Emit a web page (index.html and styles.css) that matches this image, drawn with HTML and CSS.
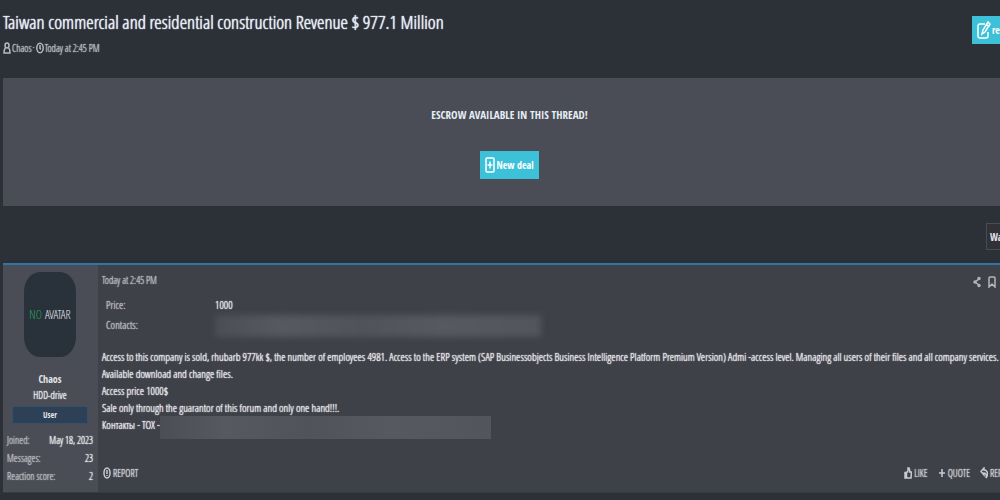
FILE: index.html
```html
<!DOCTYPE html>
<html lang="en">
<head>
  <meta charset="UTF-8">
  <title>Taiwan commercial and residential construction Revenue $ 977.1 Million</title>
  <link rel="stylesheet" href="styles.css">
</head>
<body>
  <main class="page">

    <header class="thread-header">
      <div>
        <h1>Taiwan commercial and residential construction Revenue $ 977.1 Million</h1>
        <div class="thread-meta">
          <svg class="icon icon-small" viewBox="0 0 8 12"><ellipse cx="4" cy="3.500" rx="2" ry="2.500"/><path d="M2.500 6Q1 7 1 11h6q0-4-1.500-5"/></svg>
          <a href="#chaos">Chaos</a>
          <span>·</span>
          <svg class="icon icon-small" viewBox="0 0 8 12"><ellipse cx="4" cy="6" rx="3.200" ry="4.800"/><path d="M4 3v3.500l1 1"/></svg>
          <time>Today at 2:45 PM</time>
        </div>
      </div>
      <button class="button button-reply">
        <svg class="icon icon-edit" viewBox="0 0 14 18"><path d="M8 3H3Q1 3 1 5v10q0 2 2 2h6q2 0 2-2v-4M5 13l1-4 5-8 2 2-5 8zM9.500 3.500l2 2"/></svg>
        reply
      </button>
    </header>

    <section class="escrow">
      <h2>ESCROW AVAILABLE IN THIS THREAD!</h2>
      <button class="button">
        <svg class="icon icon-deal" viewBox="0 0 10 16"><rect x="1" y="1" width="8" height="14" rx="1"/><path d="M5 4.500v7M2.500 8h5"/></svg>
        New deal
      </button>
    </section>

    <div class="thread-tools">
      <button class="button-watch">Watch</button>
    </div>

    <article class="post">
      <aside class="user">
        <div class="avatar"><span class="avatar-no">NO</span>&nbsp;AVATAR</div>
        <a class="user-name" href="#chaos">Chaos</a>
        <div class="user-title">HDD-drive</div>
        <div class="user-banner">User</div>
        <dl class="user-stats">
          <div><dt>Joined:</dt><dd>May 18, 2023</dd></div>
          <div><dt>Messages:</dt><dd>23</dd></div>
          <div><dt>Reaction score:</dt><dd>2</dd></div>
        </dl>
      </aside>

      <div class="post-main">
        <div class="post-top">
          <time>Today at 2:45 PM</time>
          <div class="post-icons">
            <a href="#share" aria-label="Share"><svg class="icon icon-small" viewBox="0 0 8 12"><path d="M6 3L2 6l4 3"/><circle cx="6" cy="2.500" r="1"/><circle cx="2" cy="6" r="1"/><circle cx="6" cy="9.500" r="1"/></svg></a>
            <a href="#bookmark" aria-label="Bookmark"><svg class="icon icon-small" viewBox="0 0 8 12"><path d="M2 1h4q1 0 1 1v9L4 8l-3 3V2q0-1 1-1z"/></svg></a>
          </div>
        </div>

        <dl class="fields">
          <dt>Price:</dt><dd>1000</dd>
          <dt>Contacts:</dt><dd><span class="hidden-contact"></span></dd>
        </dl>

        <div class="message">
          Access to this company is sold, rhubarb 977kk $, the number of employees 4981. Access to the ERP system (SAP Businessobjects Business Intelligence Platform Premium Version) Admi -access level. Managing all users of their files and all company services.<br>
          Available download and change files.<br>
          Access price 1000$<br>
          Sale only through the guarantor of this forum and only one hand!!!.<br>
          <span class="contact-line">Контакты - TOX -<span class="hidden-tox"></span></span>
        </div>

        <footer class="actions">
          <a href="#report"><svg class="icon icon-small" viewBox="0 0 8 12"><ellipse cx="4" cy="6" rx="3" ry="5"/><path d="M4 3v4M4 8v1"/></svg>REPORT</a>
          <a class="action-like" href="#like"><svg class="icon icon-small" viewBox="0 0 8 12"><path d="M1 5.500h1.500V11H1zM2.500 6L4 3.500V1h1q1 1 .5 4H7.500L7 11H2.500"/></svg>LIKE</a>
          <a href="#quote"><svg class="icon icon-small" viewBox="0 0 8 12"><path d="M4 2v8M1 6h6"/></svg>QUOTE</a>
          <a href="#reply"><svg class="icon icon-small" viewBox="0 0 8 12"><path d="M4 1L1 4.500 4 8V6q3 0 2 5 3-5 0-7.500L4 3z"/></svg>REPLY</a>
        </footer>
      </div>
    </article>

  </main>
</body>
</html>
```

FILE: styles.css
```css
* {
  box-sizing: border-box;
}

body {
  margin: 0;
  overflow: hidden;
  background: #2c3138;
  color: #e4e5e8;
  font-family: "Open Sans Condensed Light", "Open Sans Condensed", "Liberation Sans", sans-serif;
  font-size: 11px;
  line-height: 18px;
  text-shadow: 0 0 1px currentColor, 0 0 1px currentColor;
}

/* the board runs a little past the right edge of the window */
.page {
  margin: 0 -16px 0 3px;
}

a {
  color: inherit;
  text-decoration: none;
}

h1,
h2,
dl,
dd {
  margin: 0;
}

.icon {
  flex: none;
  fill: none;
  stroke: currentColor;
  stroke-width: 1.5;
}

.icon-edit {
  width: 14px;
  height: 18px;
}

.icon-deal {
  width: 10px;
  height: 16px;
}

.icon-small {
  width: 8px;
  height: 12px;
}

.thread-header {
  display: flex;
  justify-content: space-between;
  height: 78px;
  padding-top: 8px;
}

h1 {
  color: #e7edf5;
  font-size: 19px;
  font-weight: normal;
  line-height: 28px;
  white-space: nowrap;
}

.thread-meta {
  display: flex;
  align-items: center;
  gap: 1px;
  margin-top: 3px;
  color: #b6b9bf;
  font-size: 10px;
}

.button,
.button-watch,
.escrow h2,
.user-name,
.user-banner {
  font-family: "Open Sans Condensed", "Liberation Sans", sans-serif;
  font-weight: bold;
  text-shadow: none;
}

.button {
  display: flex;
  align-items: center;
  gap: 1px;
  height: 28px;
  padding: 0 5px;
  border: 0;
  background: #3cc1d9;
  color: #fff;
  font-size: 10px;
  white-space: nowrap;
}

.button-reply {
  width: 44px;
  margin-top: 8px;
  padding-right: 3px;
}

.escrow {
  display: flex;
  flex-direction: column;
  align-items: center;
  height: 128px;
  padding-top: 28px;
  background: #4a4d56;
}

.escrow h2 {
  margin-bottom: 27px;
  color: #e7edf5;
  font-size: 11px;
  line-height: 18px;
}

.thread-tools {
  display: flex;
  justify-content: flex-end;
  height: 57px;
  padding-top: 17px;
}

.button-watch {
  width: 30px;
  height: 27px;
  padding: 0 3px;
  border: 1px solid #484c53;
  background: #303238;
  color: #e4e5e8;
  font-size: 10px;
  text-align: left;
  white-space: nowrap;
}

.post {
  display: flex;
  border-top: 2px solid #2f75a5;
  border-bottom: 1px solid #383b41;
  background: #3f4148;
}

.user {
  display: flex;
  flex: none;
  flex-direction: column;
  align-items: center;
  width: 95px;
  padding: 7px 5px 7px 4px;
  background: #4a4d56;
}

.avatar {
  display: flex;
  align-items: center;
  justify-content: center;
  width: 52px;
  height: 85px;
  margin-bottom: 14px;
  border-radius: 16px / 20px;
  background: #29313b;
  font-size: 12px;
  text-shadow: none;
  white-space: nowrap;
}

.avatar-no {
  color: #28a45c;
}

.user-name {
  font-size: 10px;
  line-height: 16px;
}

.user-title {
  font-size: 10px;
  line-height: 16px;
}

.user-banner {
  width: 76px;
  margin: 3px 0 7px;
  border: 1px solid #35506a;
  background: #2d4055;
  font-size: 8px;
  line-height: 16px;
  text-align: center;
}

.user-stats {
  align-self: stretch;
  font-size: 10px;
}

.user-stats div {
  display: flex;
  justify-content: space-between;
  white-space: nowrap;
}

.user-stats dt,
.fields dt {
  color: #b4b6bb;
}

.post-main {
  display: flex;
  flex: 1;
  flex-direction: column;
  min-width: 0;
  padding: 6px 16px 10px 4px;
}

.post-top {
  display: flex;
  justify-content: space-between;
  color: #b4b6bb;
  font-size: 10px;
}

.post-icons {
  display: flex;
  gap: 7px;
  padding: 5px 4px 0 0;
}

.post-icons a {
  line-height: 12px;
}

.fields {
  display: grid;
  grid-template-columns: 109px 1fr;
  margin: 5px 0 13px 4px;
  line-height: 20px;
}

.hidden-contact,
.hidden-tox {
  display: block;
  background: linear-gradient(90deg, #4b4e54, #56595f 20%, #505359 45%, #565960 70%, #52555b);
}

.hidden-contact {
  width: 326px;
  height: 22px;
  margin-bottom: -2px;
  filter: blur(3px);
}

.message {
  line-height: 17px;
  white-space: nowrap;
}

.contact-line {
  display: flex;
}

.hidden-tox {
  width: 331px;
  height: 23px;
}

.actions {
  display: flex;
  gap: 10px;
  margin: auto -16px 0 1px;
  color: #c9cbd0;
  font-size: 10px;
}

.actions a {
  display: flex;
  align-items: center;
  gap: 2px;
}

.action-like {
  margin-left: auto;
}

.actions a:last-child {
  width: 36px;
}
```
